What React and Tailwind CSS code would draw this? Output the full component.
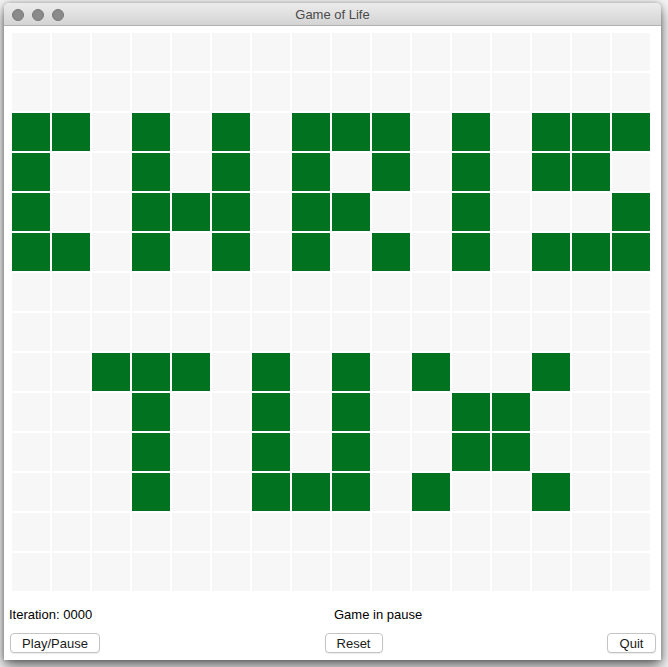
import React from 'react';

// live cells per row, columns 0..15
const ALIVE = {
    2: [0, 1, 3, 5, 7, 8, 9, 11, 13, 14, 15],
    3: [0, 3, 5, 7, 9, 11, 13, 14],
    4: [0, 3, 4, 5, 7, 8, 11, 15],
    5: [0, 1, 3, 5, 7, 9, 11, 13, 14, 15],
    8: [2, 3, 4, 6, 8, 10, 13],
    9: [3, 6, 8, 11, 12],
    10: [3, 6, 8, 11, 12],
    11: [3, 6, 7, 8, 10, 13],
};

const ROWS = 14;
const COLS = 16;

function MacButton({ children, className = '' }) {
    return (
        <button
            className={`h-[20px] rounded-[4px] border border-[#c4c4c4] bg-white text-[13px] leading-none text-[#1a1a1a] shadow-[0_1px_1px_rgba(0,0,0,0.08)] ${className}`}
        >
            {children}
        </button>
    );
}

export default function App() {
    const cells = [];
    for (let r = 0; r < ROWS; r++) {
        for (let c = 0; c < COLS; c++) {
            const on = (ALIVE[r] || []).includes(c);
            cells.push(
                <div key={`${r}-${c}`} className={on ? 'bg-[#007220]' : 'bg-[#f7f7f7]'} />
            );
        }
    }

    return (
        <div className="w-[668px] h-[667px] overflow-hidden bg-[#f4f4f4] pt-[3px] pl-[4px] font-['Liberation_Sans',Arial,sans-serif]">
            <div className="w-[657px] h-[657px] flex flex-col bg-white rounded-t-[5px] shadow-[0_6px_14px_rgba(0,0,0,0.6),0_0_4px_rgba(0,0,0,0.25)]">
                {/* Title bar */}
                <div className="relative h-[23px] shrink-0 flex items-center justify-center rounded-t-[5px] border-b border-[#b1b1b1] bg-gradient-to-b from-[#ececec] to-[#d4d4d4]">
                    <div className="absolute left-[8px] top-[6px] flex gap-[8px]">
                        <span className="w-[12px] h-[12px] rounded-full bg-[#8a8a8a] border border-[#777777]" />
                        <span className="w-[12px] h-[12px] rounded-full bg-[#8a8a8a] border border-[#777777]" />
                        <span className="w-[12px] h-[12px] rounded-full bg-[#8a8a8a] border border-[#777777]" />
                    </div>
                    <span className="text-[13px] text-[#4a4a4a] pt-[1px]">Game of Life</span>
                </div>

                {/* Board */}
                <div className="pt-[7px] pl-[8px]">
                    <div className="grid grid-cols-[repeat(16,38px)] grid-rows-[repeat(14,38px)] gap-[2px]">
                        {cells}
                    </div>
                </div>

                {/* Status */}
                <div className="mt-[16px] h-[16px] flex items-center text-[13px] text-black pl-[5px]">
                    <div className="w-[325px]">Iteration: 0000</div>
                    <div>Game in pause</div>
                </div>

                {/* Controls */}
                <div className="mt-[10px] flex justify-between pl-[6px] pr-[5px]">
                    <MacButton className="w-[90px]">Play/Pause</MacButton>
                    <MacButton className="w-[58px]">Reset</MacButton>
                    <MacButton className="w-[49px]">Quit</MacButton>
                </div>
            </div>
        </div>
    );
}
